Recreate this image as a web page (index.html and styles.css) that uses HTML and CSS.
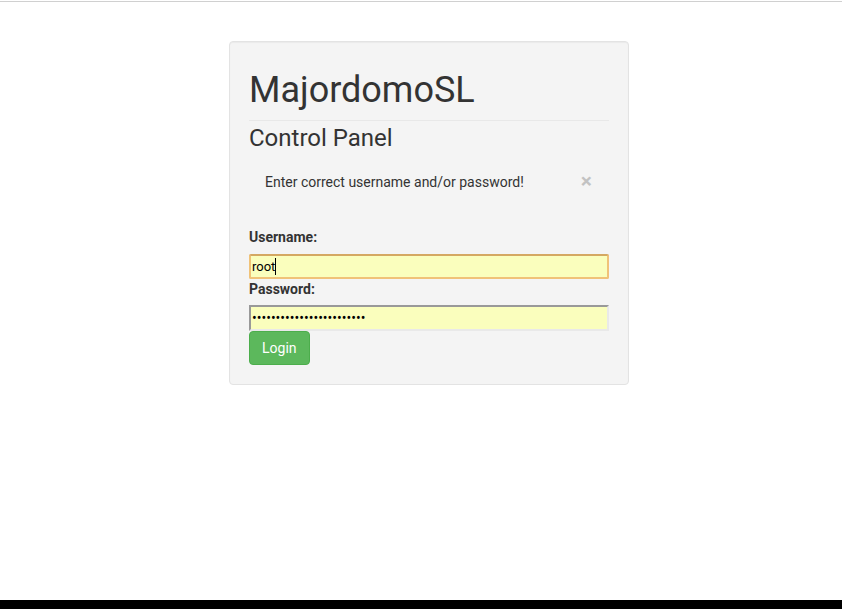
FILE: index.html
```html
<!DOCTYPE html>
<html lang="en">
<head>
<meta charset="utf-8">
<title>MajordomoSL</title>
<link rel="stylesheet" href="styles.css">
</head>
<body>
<div class="page">
  <div class="topline"></div>
  <main class="main">
    <div class="well">
      <h1 class="title">MajordomoSL</h1>
      <h3 class="subtitle">Control Panel</h3>
      <div class="alert">
        <span class="alert-text">Enter correct username and/or password!</span>
        <span class="close">&times;</span>
      </div>
      <form class="form">
        <label class="label" for="user">Username:</label>
        <div class="field">
          <input class="input input-focus" id="user" type="text" value="root"><span class="caret"></span>
        </div>
        <label class="label label-pass" for="pass">Password:</label>
        <input class="input input-pass" id="pass" type="password" value="************************">
        <button class="btn" type="button">Login</button>
      </form>
    </div>
  </main>
  <div class="bottombar"></div>
</div>
</body>
</html>
```

FILE: styles.css
```css
html, body {
  margin: 0;
  padding: 0;
  background: #ffffff;
}
body {
  font-family: Roboto, "Helvetica Neue", Arial, sans-serif;
  font-size: 14px;
  line-height: 20px;
  color: #333333;
}
.page {
  display: flex;
  flex-direction: column;
  min-height: 100vh;
}
.topline {
  margin-top: 1px;
  height: 1px;
  background: #d0d0d0;
}
.main {
  flex: 1;
  padding: 39px 0 0 229px;
}
.well {
  box-sizing: border-box;
  width: 400px;
  padding: 19px;
  background: #f4f4f4;
  border: 1px solid #e3e3e3;
  border-radius: 4px;
  box-shadow: inset 0 1px 1px rgba(0,0,0,0.04);
}
.title {
  margin: 9px 0 0;
  padding-bottom: 10px;
  border-bottom: 1px solid #e8e8e8;
  font-size: 36px;
  line-height: 40px;
  font-weight: 400;
  color: #333333;
}
.subtitle {
  margin: 4px 0 0;
  font-size: 24px;
  line-height: 26px;
  font-weight: 400;
  color: #333333;
}
.alert {
  display: flex;
  justify-content: space-between;
  align-items: center;
  margin: 4px 0 19px;
  padding: 15px 16px 15px 15px;
  border: 1px solid transparent;
}
.close {
  font-size: 21px;
  font-weight: 700;
  line-height: 1;
  color: #000;
  opacity: 0.2;
}
.form {
  display: flex;
  flex-direction: column;
  align-items: flex-start;
}
.label {
  display: block;
  font-weight: 700;
  margin-bottom: 7px;
}
.label-pass {
  margin-bottom: 6px;
}
.field {
  position: relative;
  width: 360px;
}
.input {
  box-sizing: border-box;
  display: block;
  width: 360px;
  margin: 0;
  padding: 0 1px;
  font-family: Roboto, Arial, sans-serif;
  font-size: 13px;
  color: #000;
  background: #fafebd;
  outline: none;
}
.input-focus {
  height: 25px;
  border: 2px solid #f0c278;
  border-top-color: #d4a862;
  border-radius: 2px;
}
.caret {
  position: absolute;
  left: 26px;
  top: 4px;
  width: 1px;
  height: 17px;
  background: #000;
}
.input-pass {
  height: 26px;
  font-size: 14px;
  border: 2px solid #e9e9e9;
  border-top-color: #999999;
  border-left-color: #999999;
}
.btn {
  margin: 0;
  padding: 6px 12px;
  font-family: Roboto, Arial, sans-serif;
  font-size: 14px;
  line-height: 20px;
  color: #ffffff;
  background: #5cb85c;
  border: 1px solid #4cae4c;
  border-radius: 4px;
}
.bottombar {
  height: 9px;
  background: #000000;
}
```
